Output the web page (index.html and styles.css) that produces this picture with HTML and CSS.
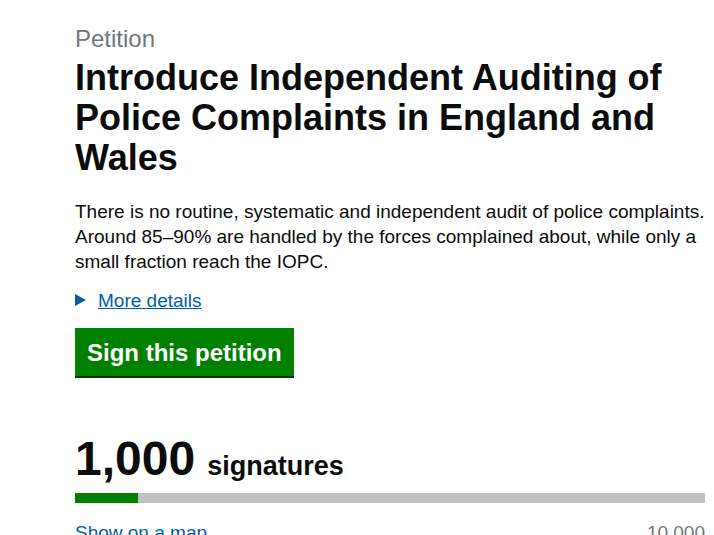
FILE: index.html
```html
<!DOCTYPE html>
<html lang="en">
<head>
<meta charset="utf-8">
<title>Petition</title>
<link rel="stylesheet" href="styles.css">
</head>
<body>
<main class="page">
  <p class="kicker">Petition</p>
  <h1 class="title">Introduce Independent Auditing of Police Complaints in England and Wales</h1>
  <p class="lede">There is no routine, systematic and independent audit of police complaints. Around 85–90% are handled by the forces complained about, while only a small fraction reach the IOPC.</p>
  <details class="details">
    <summary class="summary"><span class="summary-text">More details</span></summary>
  </details>
  <a class="button" href="#">Sign this petition</a>
  <div class="count">
    <span class="count-num">1,000</span>
    <span class="count-label">signatures</span>
  </div>
  <div class="progress"><div class="progress-bar" style="width:10%"></div></div>
  <div class="meta">
    <a class="link" href="#">Show on a map</a>
    <span class="target">10,000</span>
  </div>
</main>
</body>
</html>
```
FILE: styles.css
```css
html, body {
  margin: 0;
  padding: 0;
  background: #ffffff;
}
body {
  font-family: "Liberation Sans", Arial, sans-serif;
  color: #0b0c0c;
}
.page {
  width: 630px;
  margin-left: 75px;
  padding-top: 24px;
}
.kicker {
  margin: 0;
  font-size: 24px;
  line-height: 30px;
  color: #6f777b;
}
.title {
  margin: 4px 0 0 0;
  font-size: 36px;
  line-height: 40px;
  font-weight: bold;
}
.lede {
  margin: 21px 0 0 0;
  font-size: 19px;
  line-height: 25px;
}
.details {
  margin-top: 14px;
  font-size: 19px;
  line-height: 25px;
}
.summary {
  list-style: none;
  display: flex;
  align-items: center;
  color: #005ea5;
  cursor: pointer;
}
.summary::-webkit-details-marker { display: none; }
.summary::before {
  content: "";
  width: 0;
  height: 0;
  border-style: solid;
  border-width: 6px 0 6px 11px;
  border-color: transparent transparent transparent #005ea5;
  margin-right: 12px;
  margin-top: -1px;
}
.summary-text {
  text-decoration: underline;
}
.button {
  display: inline-block;
  margin-top: 15px;
  background: #008000;
  color: #ffffff;
  font-size: 24px;
  font-weight: bold;
  line-height: 30px;
  padding: 10px 12px 8px 12px;
  text-decoration: none;
  box-shadow: 0 2px 0 #003a00;
}
.count {
  margin-top: 53px;
  display: flex;
  align-items: baseline;
  gap: 12px;
}
.count-num {
  font-size: 48px;
  font-weight: bold;
  line-height: 60px;
}
.count-label {
  font-size: 27px;
  font-weight: bold;
}
.progress {
  margin-top: 4px;
  height: 10px;
  background: #bfc1c3;
}
.progress-bar {
  height: 100%;
  background: #008000;
}
.meta {
  margin-top: 17px;
  display: flex;
  justify-content: space-between;
  font-size: 19px;
  line-height: 25px;
}
.link {
  color: #005ea5;
  text-decoration: underline;
}
.target {
  color: #6f777b;
}
```
